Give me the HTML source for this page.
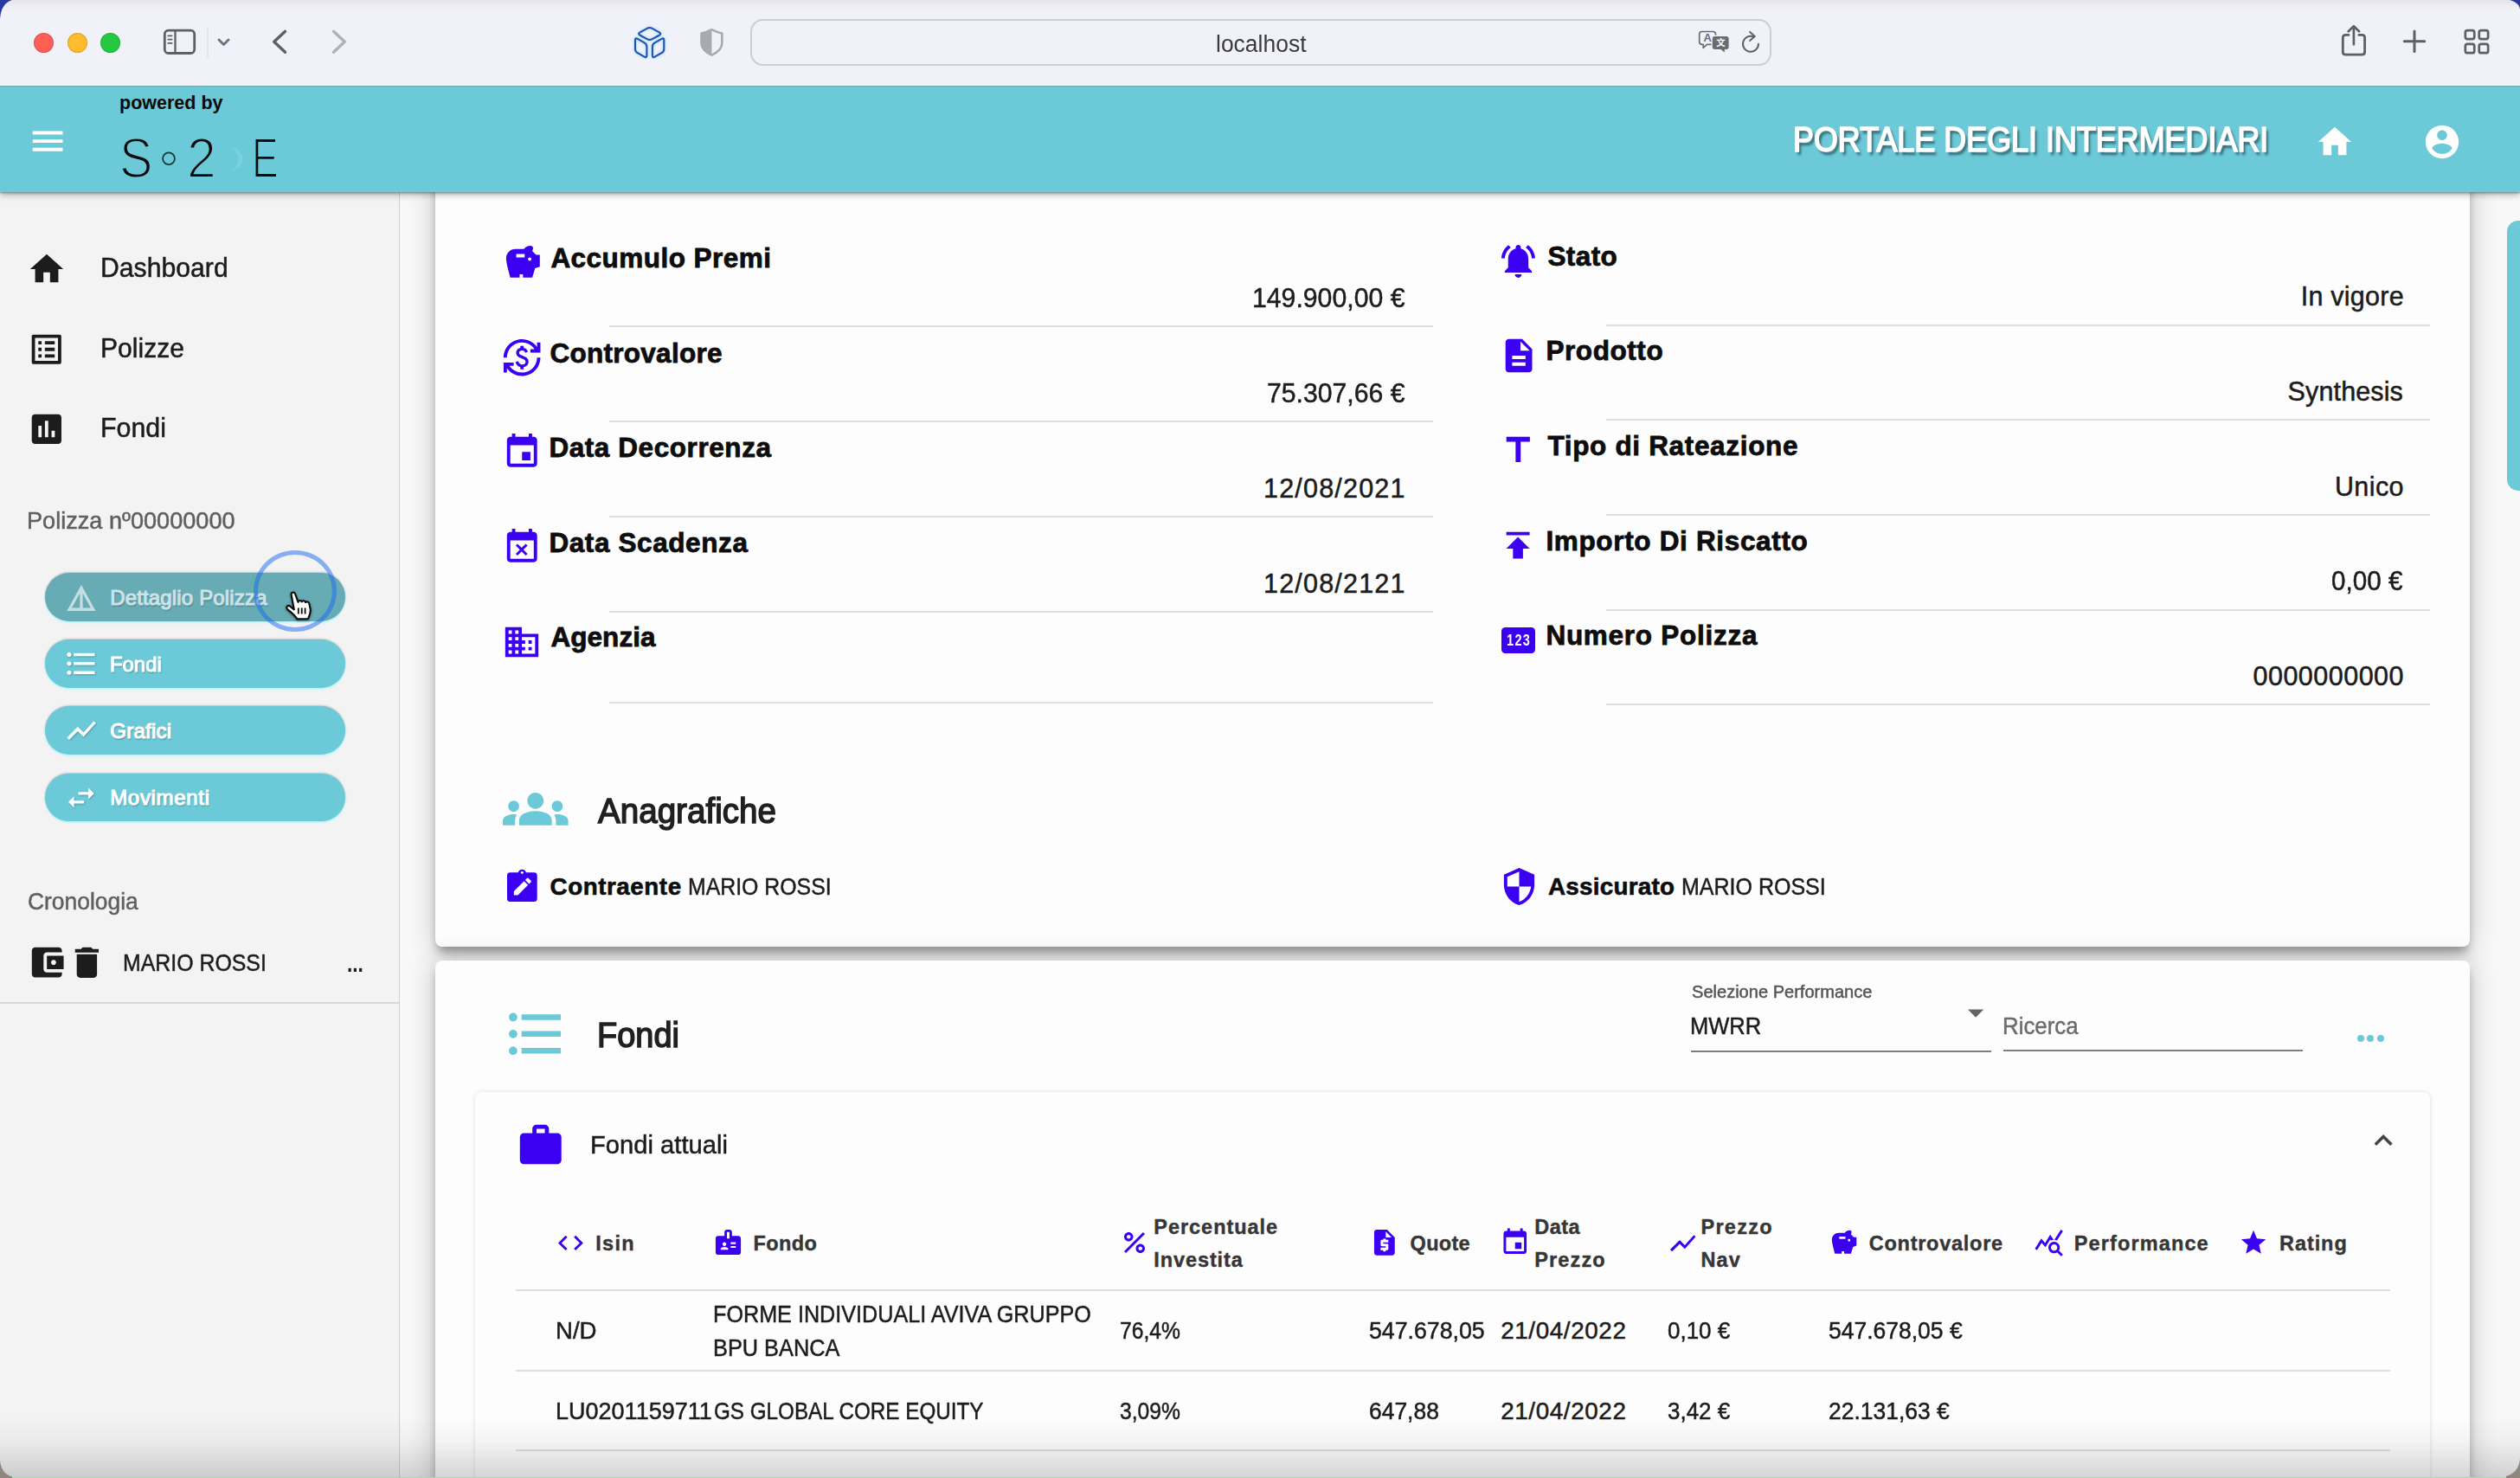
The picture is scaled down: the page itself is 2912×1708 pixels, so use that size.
<!DOCTYPE html>
<html lang="it"><head><meta charset="utf-8"><title>Portale degli Intermediari</title>
<style>
html,body{margin:0;padding:0}
body{width:2912px;height:1708px;position:relative;overflow:hidden;background:#f8f8f8;font-family:"Liberation Sans",sans-serif}
.t{position:absolute;white-space:nowrap;line-height:1}
.i{position:absolute;overflow:visible}
.a{position:absolute}
.ln{position:absolute;height:2px;background:#dfdfdf}
.card{position:absolute;background:#fdfdfd;box-shadow:0 9px 12px -3px rgba(0,0,0,.36),0 1px 30px 4px rgba(0,0,0,.16)}
.btn{position:absolute;left:52px;width:347px;height:55.4px;border-radius:28px;background:#6bc9d8;box-shadow:0 -1px 2px rgba(80,80,80,.3),0 1.5px 2px rgba(170,245,255,.95)}
</style></head><body>
<main>
<section class="card" style="left:502.7px;top:150px;width:2351.6px;height:943.6px;border-radius:0 0 8px 8px"></section>
<section class="card" style="left:502.7px;top:1110px;width:2351.6px;height:700px;border-radius:8px 8px 0 0"></section>
<div class="a" style="left:549px;top:1261.8px;width:2258.8px;height:600px;border-radius:8px;background:#fdfdfd;box-shadow:0 0 5px rgba(0,0,0,.13)"></div>
<div class="ln" style="left:703.7px;top:376.3px;width:952.1px;height:2px;background:#dfdfdf"></div>
<div class="ln" style="left:703.7px;top:486.2px;width:952.1px;height:2px;background:#dfdfdf"></div>
<div class="ln" style="left:703.7px;top:595.8px;width:952.1px;height:2px;background:#dfdfdf"></div>
<div class="ln" style="left:703.7px;top:705.5px;width:952.1px;height:2px;background:#dfdfdf"></div>
<div class="ln" style="left:703.7px;top:811.3px;width:952.1px;height:2px;background:#dfdfdf"></div>
<div class="ln" style="left:1855.6px;top:374.7px;width:952.4px;height:2px;background:#dfdfdf"></div>
<div class="ln" style="left:1855.6px;top:484.2px;width:952.4px;height:2px;background:#dfdfdf"></div>
<div class="ln" style="left:1855.6px;top:594.0px;width:952.4px;height:2px;background:#dfdfdf"></div>
<div class="ln" style="left:1855.6px;top:703.7px;width:952.4px;height:2px;background:#dfdfdf"></div>
<div class="ln" style="left:1855.6px;top:813.2px;width:952.4px;height:2px;background:#dfdfdf"></div>
<div class="ln" style="left:595.7px;top:1490.4px;width:2165.9px;height:2px;background:#dfdfdf"></div>
<div class="ln" style="left:595.7px;top:1583.3px;width:2165.9px;height:2px;background:#dfdfdf"></div>
<div class="ln" style="left:595.7px;top:1675.2px;width:2165.9px;height:2px;background:#dfdfdf"></div>
<div class="ln" style="left:1954.2px;top:1213.5px;width:346.6px;height:2px;background:#7d7d7d"></div>
<div class="ln" style="left:2314.9px;top:1212.7px;width:346.5px;height:2px;background:#7d7d7d"></div>
<svg class="i" style="left:580.5px;top:279.9px;width:46.7px;height:46.7px;" viewBox="0 0 24 24"><path fill="#3b00f2" d="M19.83 7.5l-2.27-2.27c.07-.42.18-.81.32-1.15.08-.18.12-.37.12-.58 0-.83-.67-1.5-1.5-1.5-1.64 0-3.09.79-4 2h-5C4.460 4 2 6.460 2 9.500S4.500 21 4.500 21H10v-2h2v2h5.500l1.680-5.590 2.820-.940V7.500h-2.170zM13 9H8V7h5v2zm3 2c-.55 0-1-.45-1-1s.45-1 1-1 1 .45 1 1-.45 1-1 1z"/></svg>
<svg class="i" style="left:579.9px;top:389.5px;width:46.4px;height:46.4px;" viewBox="0 0 24 24"><path fill="#3b00f2" d="M12.89 11.1c-1.78-.59-2.64-.96-2.64-1.9 0-1.02 1.11-1.39 1.81-1.39 1.31 0 1.79.99 1.9 1.34l1.58-.67c-.15-.45-.82-1.92-2.54-2.24V5h-2v1.260c-2.480.560-2.490 2.860-2.490 2.960 0 2.270 2.250 2.910 3.350 3.310 1.580.560 2.280 1.070 2.280 2.030 0 1.130-1.050 1.610-1.980 1.610-1.820 0-2.340-1.870-2.400-2.090l-1.660.670c.630 2.190 2.280 2.780 2.900 2.960V19h2v-1.240c.4-.09 2.900-.59 2.900-3.220 0-1.390-.61-2.610-3.010-3.440zM3 21H1v-6h6v2H4.520c1.610 2.410 4.360 4 7.480 4 4.970 0 9-4.030 9-9h2c0 6.080-4.920 11-11 11-3.720 0-7.010-1.850-9-4.670V21zm-2-9C1 5.920 5.920 1 12 1c3.720 0 7.010 1.850 9 4.670V3h2v6h-6V7h2.480C17.870 4.590 15.120 3 12 3c-4.970 0-9 4.030-9 9H1z"/></svg>
<svg class="i" style="left:580.0px;top:499.3px;width:46.5px;height:46.5px;" viewBox="0 0 24 24"><path fill="#3b00f2" d="M17 12h-5v5h5v-5zM16 1v2H8V1H6v2H5c-1.11 0-1.990.9-1.990 2L3 19c0 1.100.890 2 2 2h14c1.100 0 2-.9 2-2V5c0-1.100-.9-2-2-2h-1V1h-2zm3 18H5V8h14v11z"/></svg>
<svg class="i" style="left:580.0px;top:608.9px;width:46.5px;height:46.5px;" viewBox="0 0 24 24"><path fill="#3b00f2" d="M9.31 17l2.44-2.44L14.19 17l1.060-1.060-2.440-2.440 2.440-2.440L14.190 10l-2.440 2.440L9.310 10l-1.060 1.060 2.440 2.440-2.440 2.440L9.310 17zM19 3h-1V1h-2v2H8V1H6v2H5c-1.110 0-1.990.9-1.990 2L3 19c0 1.100.890 2 2 2h14c1.100 0 2-.9 2-2V5c0-1.100-.9-2-2-2zm0 16H5V8h14v11z"/></svg>
<svg class="i" style="left:580.2px;top:718.6px;width:46.0px;height:46.0px;" viewBox="0 0 24 24"><path fill="#3b00f2" d="M12 7V3H2v18h20V7H12zM6 19H4v-2h2v2zm0-4H4v-2h2v2zm0-4H4V9h2v2zm0-4H4V5h2v2zm4 12H8v-2h2v2zm0-4H8v-2h2v2zm0-4H8V9h2v2zm0-4H8V5h2v2zm10 12h-8v-2h2v-2h-2v-2h2v-2h-2V9h8v10zm-2-8h-2v2h2v-2zm0 4h-2v2h2v-2z"/></svg>
<svg class="i" style="left:1731.2px;top:277.9px;width:46.9px;height:46.9px;" viewBox="0 0 24 24"><path fill="#3b00f2" d="M7.58 4.08L6.15 2.65C3.75 4.48 2.17 7.3 2.03 10.5h2c.15-2.65 1.510-4.970 3.550-6.420zm12.390 6.420h2c-.15-3.200-1.730-6.020-4.120-7.850l-1.420 1.430c2.020 1.450 3.390 3.770 3.540 6.420zM18 11c0-3.070-1.640-5.640-4.500-6.320V4c0-.83-.67-1.500-1.500-1.500s-1.500.67-1.500 1.500v.680C7.630 5.360 6 7.920 6 11v5l-2 2v1h16v-1l-2-2v-5zm-6 11c.14 0 .27-.01.40-.04.65-.14 1.180-.58 1.440-1.180.1-.24.150-.5.150-.78h-4c.010 1.100.9 2 2.010 2z"/></svg>
<svg class="i" style="left:1731.6px;top:387.8px;width:46.2px;height:46.2px;" viewBox="0 0 24 24"><path fill="#3b00f2" d="M14 2H6c-1.100 0-1.990.9-1.990 2L4 20c0 1.100.890 2 1.990 2H18c1.100 0 2-.9 2-2V8l-6-6zm2 16H8v-2h8v2zm0-4H8v-2h8v2zm-3-5V3.500L18.500 9H13z"/></svg>
<svg class="i" style="left:1731.4px;top:497.3px;width:46.6px;height:46.6px;" viewBox="0 0 24 24"><path fill="#3b00f2" d="M5 4v3h5.500v12h3V7H19V4z"/></svg>
<svg class="i" style="left:1731.4px;top:607.4px;width:46.2px;height:46.2px;" viewBox="0 0 24 24"><path fill="#3b00f2" d="M5 4v2h14V4H5zm0 10h4v6h6v-6h4l-7-7-7 7z"/></svg>
<svg class="i" style="left:581.1px;top:896.8px;width:75.6px;height:75.6px;" viewBox="0 0 24 24"><path fill="#6bc9d8" d="M12 12.750c1.630 0 3.070.39 4.240.9 1.080.48 1.760 1.560 1.760 2.730V18H6v-1.610c0-1.180.680-2.260 1.760-2.730 1.170-.520 2.610-.910 4.240-.910zM4 13c1.100 0 2-.9 2-2s-.9-2-2-2-2 .9-2 2 .9 2 2 2zm1.130 1.100c-.370-.06-.740-.1-1.130-.1-.990 0-1.930.21-2.780.58C.480 14.900 0 15.620 0 16.430V18h4.500v-1.610c0-.830.230-1.610.630-2.290zM20 13c1.100 0 2-.9 2-2s-.9-2-2-2-2 .9-2 2 .9 2 2 2zm4 3.430c0-.81-.48-1.530-1.220-1.850-.85-.37-1.790-.58-2.780-.58-.39 0-.76.04-1.130.1.4.68.630 1.460.630 2.290V18H24v-1.570zM12 6c1.660 0 3 1.340 3 3s-1.340 3-3 3-3-1.340-3-3 1.340-3 3-3z"/></svg>
<svg class="i" style="left:1731.6px;top:1001.2px;width:47.0px;height:47.0px;" viewBox="0 0 24 24"><path fill="#3b00f2" d="M12 1L3 5v6c0 5.550 3.840 10.740 9 12 5.160-1.260 9-6.450 9-12V5l-9-4zm0 10.990h7c-.53 4.120-3.280 7.790-7 8.940V12H5V6.300l7-3.110v8.800z"/></svg>
<svg class="i" style="left:580.1px;top:1155.6px;width:77.7px;height:77.7px;" viewBox="0 0 24 24"><path fill="#6bc9d8" d="M4 10.5c-.83 0-1.5.67-1.5 1.5s.67 1.5 1.5 1.5 1.5-.67 1.5-1.5-.67-1.5-1.5-1.5zm0-6c-.83 0-1.5.67-1.5 1.5S3.17 7.5 4 7.5 5.5 6.83 5.5 6 4.83 4.500 4 4.500zm0 12c-.83 0-1.5.68-1.5 1.5s.68 1.5 1.5 1.5 1.5-.68 1.5-1.5-.67-1.5-1.5-1.5zM7 19h14v-2H7v2zm0-6h14v-2H7v2zm0-8v2h14V5H7z"/></svg>
<svg class="i" style="left:2261.4px;top:1147.8px;width:44.3px;height:44.3px;" viewBox="0 0 24 24"><path fill="#666" d="M7 10l5 5 5-5z"/></svg>
<svg class="i" style="left:595.7px;top:1294.9px;width:57.5px;height:57.5px;" viewBox="0 0 24 24"><path fill="#3b00f2" d="M20 6h-4V4c0-1.110-.89-2-2-2h-4c-1.110 0-2 .89-2 2v2H4c-1.110 0-1.990.89-1.990 2L2 19c0 1.110.890 2 2 2h16c1.110 0 2-.89 2-2V8c0-1.110-.89-2-2-2zm-6 0h-4V4h4v2z"/></svg>
<svg class="i" style="left:2733.0px;top:1296.7px;width:42.2px;height:42.2px;" viewBox="0 0 24 24"><path fill="#444" d="M12 8l-6 6 1.410 1.410L12 10.830l4.590 4.580L18 14z"/></svg>
<svg class="i" style="left:641.6px;top:1418.9px;width:34.8px;height:34.8px;" viewBox="0 0 24 24"><path fill="#3b00f2" d="M9.400 16.600L4.800 12l4.600-4.600L8 6l-6 6 6 6 1.400-1.400zm5.200 0l4.600-4.600-4.600-4.600L16 6l6 6-6 6-1.400-1.400z"/></svg>
<svg class="i" style="left:824.0px;top:1418.2px;width:35.0px;height:35.0px;" viewBox="0 0 24 24"><path fill="#3b00f2" d="M20 7h-5V4c0-1.100-.9-2-2-2h-2c-1.100 0-2 .9-2 2v3H4c-1.100 0-2 .9-2 2v11c0 1.100.9 2 2 2h16c1.100 0 2-.9 2-2V9c0-1.100-.9-2-2-2zM9 12c.83 0 1.500.67 1.500 1.500S9.830 15 9 15s-1.500-.67-1.500-1.500S8.170 12 9 12zm3 6H6v-.75c0-1 2-1.500 3-1.500s3 .5 3 1.500V18zm1-9h-2V4h2v5zm5 7.500h-4V15h4v1.500zm0-3h-4V12h4v1.500z"/></svg>
<svg class="i" style="left:1293.0px;top:1418.0px;width:36.0px;height:36.0px;" viewBox="0 0 24 24"><path fill="#3b00f2" d="M7.500 4C5.570 4 4 5.570 4 7.500S5.570 11 7.500 11 11 9.430 11 7.500 9.430 4 7.500 4zm0 5C6.670 9 6 8.330 6 7.500S6.670 6 7.500 6 9 6.670 9 7.500 8.330 9 7.500 9zM16.500 13c-1.930 0-3.500 1.570-3.500 3.500s1.570 3.500 3.500 3.500 3.500-1.570 3.500-3.500-1.570-3.500-3.500-3.500zm0 5c-.83 0-1.500-.67-1.500-1.500s.67-1.500 1.500-1.500 1.500.67 1.500 1.500-.67 1.500-1.500 1.500zM5.410 20L4 18.590 18.590 4 20 5.410z"/></svg>
<svg class="i" style="left:1581.8px;top:1417.6px;width:35.7px;height:35.7px;" viewBox="0 0 24 24"><path fill="#3b00f2" d="M14 2H6c-1.100 0-2 .9-2 2v16c0 1.100.9 2 2 2h12c1.100 0 2-.9 2-2V8l-6-6zm1 10h-4v1h3c.55 0 1 .45 1 1v3c0 .55-.45 1-1 1h-1v1h-2v-1H9v-2h4v-1h-3c-.55 0-1-.45-1-1v-3c0-.55.45-1 1-1h1V9h2v1h2v2zm-2-4V3.500L17.500 8H13z"/></svg>
<svg class="i" style="left:1733.2px;top:1417.8px;width:35.5px;height:35.5px;" viewBox="0 0 24 24"><path fill="#3b00f2" d="M17 12h-5v5h5v-5zM16 1v2H8V1H6v2H5c-1.11 0-1.990.9-1.990 2L3 19c0 1.100.890 2 2 2h14c1.100 0 2-.9 2-2V5c0-1.100-.9-2-2-2h-1V1h-2zm3 18H5V8h14v11z"/></svg>
<svg class="i" style="left:1927.1px;top:1418.5px;width:35.4px;height:35.4px;" viewBox="0 0 24 24"><path fill="#3b00f2" d="M3.5 18.49l6-6.01 4 4L22 6.92l-1.41-1.41-7.09 7.97-4-4L2 16.990z"/></svg>
<svg class="i" style="left:2113.6px;top:1419.3px;width:34.1px;height:34.1px;" viewBox="0 0 24 24"><path fill="#3b00f2" d="M19.83 7.5l-2.27-2.27c.07-.42.18-.81.32-1.15.08-.18.12-.37.12-.58 0-.83-.67-1.5-1.5-1.5-1.64 0-3.09.79-4 2h-5C4.460 4 2 6.460 2 9.500S4.500 21 4.500 21H10v-2h2v2h5.500l1.680-5.590 2.820-.940V7.500h-2.170zM13 9H8V7h5v2zm3 2c-.55 0-1-.45-1-1s.45-1 1-1 1 .45 1 1-.45 1-1 1z"/></svg>
<svg class="i" style="left:2349.9px;top:1417.9px;width:35.3px;height:35.3px;" viewBox="0 0 24 24"><path fill="#3b00f2" d="M19.880 18.470c.440-.7.700-1.510.700-2.390 0-2.490-2.010-4.500-4.500-4.500s-4.500 2.010-4.500 4.500 2.010 4.500 4.490 4.500c.880 0 1.700-.260 2.390-.7L21.580 23 23 21.580l-3.120-3.110zm-3.800.11c-1.380 0-2.500-1.120-2.500-2.500s1.120-2.500 2.500-2.500 2.500 1.120 2.500 2.500-1.120 2.500-2.500 2.500zm-.360-8.500c-.740.020-1.450.180-2.100.450l-.550-.830-3.800 6.180-3.010-3.520-3.630 5.810L1 17l5-8 3 3.500L13 6l2.720 4.080zm2.590.5c-.640-.280-1.330-.450-2.050-.490L21.380 2 23 3.180l-4.690 7.400z"/></svg>
<svg class="i" style="left:2587.3px;top:1419.3px;width:34.1px;height:34.1px;" viewBox="0 0 24 24"><path fill="#3b00f2" d="M12 17.270L18.180 21l-1.640-7.030L22 9.240l-7.190-.610L12 2 9.190 8.630 2 9.240l5.460 4.730L5.820 21z"/></svg>
<span class="t" style="left:636.4px;top:282.7px;font-size:31.5px;color:#0d0d0d;font-weight:700;letter-spacing:0.46px;-webkit-text-stroke:0.8px currentColor;">Accumulo Premi</span>
<span class="t" style="left:635.4px;top:392.7px;font-size:31.5px;color:#0d0d0d;font-weight:700;letter-spacing:0.28px;-webkit-text-stroke:0.8px currentColor;">Controvalore</span>
<span class="t" style="left:634.4px;top:502.1px;font-size:31.5px;color:#0d0d0d;font-weight:700;letter-spacing:0.57px;-webkit-text-stroke:0.8px currentColor;">Data Decorrenza</span>
<span class="t" style="left:634.4px;top:611.7px;font-size:31.5px;color:#0d0d0d;font-weight:700;letter-spacing:0.60px;-webkit-text-stroke:0.8px currentColor;">Data Scadenza</span>
<span class="t" style="left:636.4px;top:721.3px;font-size:31.5px;color:#0d0d0d;font-weight:700;letter-spacing:0.07px;-webkit-text-stroke:0.8px currentColor;">Agenzia</span>
<span class="t" style="left:1788.4px;top:280.7px;font-size:31.5px;color:#0d0d0d;font-weight:700;letter-spacing:0.42px;-webkit-text-stroke:0.8px currentColor;">Stato</span>
<span class="t" style="left:1786.4px;top:390.1px;font-size:31.5px;color:#0d0d0d;font-weight:700;letter-spacing:0.58px;-webkit-text-stroke:0.8px currentColor;">Prodotto</span>
<span class="t" style="left:1788.4px;top:500.1px;font-size:31.5px;color:#0d0d0d;font-weight:700;letter-spacing:0.67px;-webkit-text-stroke:0.8px currentColor;">Tipo di Rateazione</span>
<span class="t" style="left:1786.4px;top:609.8px;font-size:31.5px;color:#0d0d0d;font-weight:700;letter-spacing:0.66px;-webkit-text-stroke:0.8px currentColor;">Importo Di Riscatto</span>
<span class="t" style="left:1786.4px;top:719.4px;font-size:31.5px;color:#0d0d0d;font-weight:700;letter-spacing:0.74px;-webkit-text-stroke:0.8px currentColor;">Numero Polizza</span>
<span class="t" style="left:1447.3px;top:328.7px;font-size:30.5px;color:#1c1c1c;-webkit-text-stroke:0.5px currentColor;transform-origin:0 0;transform:scaleX(0.9908);">149.900,00 €</span>
<span class="t" style="left:1464.3px;top:438.6px;font-size:30.5px;color:#1c1c1c;-webkit-text-stroke:0.5px currentColor;transform-origin:0 0;transform:scaleX(0.9896);">75.307,66 €</span>
<span class="t" style="left:1460.0px;top:548.6px;font-size:30.5px;color:#1c1c1c;letter-spacing:1.20px;-webkit-text-stroke:0.5px currentColor;">12/08/2021</span>
<span class="t" style="left:1460.0px;top:658.5px;font-size:30.5px;color:#1c1c1c;letter-spacing:1.20px;-webkit-text-stroke:0.5px currentColor;">12/08/2121</span>
<span class="t" style="left:2658.7px;top:326.8px;font-size:30.5px;color:#1c1c1c;letter-spacing:0.24px;-webkit-text-stroke:0.5px currentColor;">In vigore</span>
<span class="t" style="left:2643.6px;top:436.8px;font-size:30.5px;color:#1c1c1c;letter-spacing:0.13px;-webkit-text-stroke:0.5px currentColor;">Synthesis</span>
<span class="t" style="left:2697.9px;top:546.6px;font-size:30.5px;color:#1c1c1c;letter-spacing:0.42px;-webkit-text-stroke:0.5px currentColor;">Unico</span>
<span class="t" style="left:2694.1px;top:656.3px;font-size:30.5px;color:#1c1c1c;-webkit-text-stroke:0.5px currentColor;transform-origin:0 0;transform:scaleX(0.9721);">0,00 €</span>
<span class="t" style="left:2603.5px;top:765.8px;font-size:30.5px;color:#1c1c1c;letter-spacing:0.49px;-webkit-text-stroke:0.5px currentColor;">0000000000</span>
<span class="t" style="left:691.0px;top:916.6px;font-size:40.5px;color:#202020;-webkit-text-stroke:1.5px currentColor;transform-origin:0 0;transform:scaleX(0.9528);">Anagrafiche</span>
<span class="t" style="left:635.6px;top:1011.0px;font-size:27.8px;color:#0d0d0d;font-weight:700;letter-spacing:0.53px;-webkit-text-stroke:0.6px currentColor;">Contraente</span>
<span class="t" style="left:794.5px;top:1011.0px;font-size:27.8px;color:#1c1c1c;-webkit-text-stroke:0.5px currentColor;transform-origin:0 0;transform:scaleX(0.8937);">MARIO ROSSI</span>
<span class="t" style="left:1788.9px;top:1010.8px;font-size:27.8px;color:#0d0d0d;font-weight:700;letter-spacing:0.27px;-webkit-text-stroke:0.6px currentColor;">Assicurato</span>
<span class="t" style="left:1942.5px;top:1010.8px;font-size:27.8px;color:#1c1c1c;-webkit-text-stroke:0.5px currentColor;transform-origin:0 0;transform:scaleX(0.8997);">MARIO ROSSI</span>
<span class="t" style="left:690.0px;top:1175.7px;font-size:40.5px;color:#202020;-webkit-text-stroke:1.5px currentColor;transform-origin:0 0;transform:scaleX(0.9376);">Fondi</span>
<span class="t" style="left:1955.2px;top:1134.5px;font-size:21px;color:#555;-webkit-text-stroke:0.5px currentColor;transform-origin:0 0;transform:scaleX(0.9549);">Selezione Performance</span>
<span class="t" style="left:1953.3px;top:1172.0px;font-size:27.8px;color:#1c1c1c;-webkit-text-stroke:0.5px currentColor;transform-origin:0 0;transform:scaleX(0.9183);">MWRR</span>
<span class="t" style="left:2314.0px;top:1172.0px;font-size:27.8px;color:#6c6c6c;-webkit-text-stroke:0.5px currentColor;transform-origin:0 0;transform:scaleX(0.9293);">Ricerca</span>
<span class="t" style="left:682.0px;top:1308.0px;font-size:29.5px;color:#1c1c1c;-webkit-text-stroke:0.5px currentColor;transform-origin:0 0;transform:scaleX(0.9888);">Fondi attuali</span>
<span class="t" style="left:688.3px;top:1426.0px;font-size:23.5px;color:#363636;font-weight:700;letter-spacing:1.26px;-webkit-text-stroke:0.4px currentColor;">Isin</span>
<span class="t" style="left:870.6px;top:1426.0px;font-size:23.5px;color:#363636;font-weight:700;letter-spacing:0.37px;-webkit-text-stroke:0.4px currentColor;">Fondo</span>
<span class="t" style="left:1333.3px;top:1406.5px;font-size:23.5px;color:#363636;font-weight:700;letter-spacing:0.96px;-webkit-text-stroke:0.4px currentColor;">Percentuale</span>
<span class="t" style="left:1333.3px;top:1445.2px;font-size:23.5px;color:#363636;font-weight:700;letter-spacing:0.90px;-webkit-text-stroke:0.4px currentColor;">Investita</span>
<span class="t" style="left:1629.6px;top:1426.2px;font-size:23.5px;color:#363636;font-weight:700;letter-spacing:0.27px;-webkit-text-stroke:0.4px currentColor;">Quote</span>
<span class="t" style="left:1773.2px;top:1406.5px;font-size:23.5px;color:#363636;font-weight:700;letter-spacing:0.48px;-webkit-text-stroke:0.4px currentColor;">Data</span>
<span class="t" style="left:1773.2px;top:1445.2px;font-size:23.5px;color:#363636;font-weight:700;letter-spacing:1.14px;-webkit-text-stroke:0.4px currentColor;">Prezzo</span>
<span class="t" style="left:1965.5px;top:1406.5px;font-size:23.5px;color:#363636;font-weight:700;letter-spacing:1.26px;-webkit-text-stroke:0.4px currentColor;">Prezzo</span>
<span class="t" style="left:1965.5px;top:1445.2px;font-size:23.5px;color:#363636;font-weight:700;letter-spacing:1.13px;-webkit-text-stroke:0.4px currentColor;">Nav</span>
<span class="t" style="left:2159.8px;top:1426.2px;font-size:23.5px;color:#363636;font-weight:700;letter-spacing:0.73px;-webkit-text-stroke:0.4px currentColor;">Controvalore</span>
<span class="t" style="left:2396.7px;top:1426.2px;font-size:23.5px;color:#363636;font-weight:700;letter-spacing:1.13px;-webkit-text-stroke:0.4px currentColor;">Performance</span>
<span class="t" style="left:2634.0px;top:1426.2px;font-size:23.5px;color:#363636;font-weight:700;letter-spacing:0.93px;-webkit-text-stroke:0.4px currentColor;">Rating</span>
<span class="t" style="left:641.9px;top:1524.2px;font-size:27.8px;color:#1c1c1c;-webkit-text-stroke:0.5px currentColor;transform-origin:0 0;transform:scaleX(0.9934);">N/D</span>
<span class="t" style="left:823.5px;top:1505.1px;font-size:27.8px;color:#1c1c1c;-webkit-text-stroke:0.5px currentColor;transform-origin:0 0;transform:scaleX(0.9056);">FORME INDIVIDUALI AVIVA GRUPPO</span>
<span class="t" style="left:823.5px;top:1543.7px;font-size:27.8px;color:#1c1c1c;-webkit-text-stroke:0.5px currentColor;transform-origin:0 0;transform:scaleX(0.9113);">BPU BANCA</span>
<span class="t" style="left:1294.4px;top:1524.4px;font-size:27.8px;color:#1c1c1c;-webkit-text-stroke:0.5px currentColor;transform-origin:0 0;transform:scaleX(0.8884);">76,4%</span>
<span class="t" style="left:1581.8px;top:1524.4px;font-size:27.8px;color:#1c1c1c;-webkit-text-stroke:0.5px currentColor;transform-origin:0 0;transform:scaleX(0.9611);">547.678,05</span>
<span class="t" style="left:1734.2px;top:1524.4px;font-size:27.8px;color:#1c1c1c;letter-spacing:0.62px;-webkit-text-stroke:0.5px currentColor;">21/04/2022</span>
<span class="t" style="left:1927.0px;top:1524.4px;font-size:27.8px;color:#1c1c1c;-webkit-text-stroke:0.5px currentColor;transform-origin:0 0;transform:scaleX(0.9346);">0,10 €</span>
<span class="t" style="left:2112.6px;top:1524.4px;font-size:27.8px;color:#1c1c1c;-webkit-text-stroke:0.5px currentColor;transform-origin:0 0;transform:scaleX(0.9528);">547.678,05 €</span>
<span class="t" style="left:641.7px;top:1616.7px;font-size:27.8px;color:#1c1c1c;-webkit-text-stroke:0.5px currentColor;transform-origin:0 0;transform:scaleX(0.9720);">LU0201159711</span>
<span class="t" style="left:824.5px;top:1617.1px;font-size:27.8px;color:#1c1c1c;-webkit-text-stroke:0.5px currentColor;transform-origin:0 0;transform:scaleX(0.8716);">GS GLOBAL CORE EQUITY</span>
<span class="t" style="left:1294.4px;top:1617.1px;font-size:27.8px;color:#1c1c1c;-webkit-text-stroke:0.5px currentColor;transform-origin:0 0;transform:scaleX(0.8884);">3,09%</span>
<span class="t" style="left:1581.8px;top:1617.1px;font-size:27.8px;color:#1c1c1c;-webkit-text-stroke:0.5px currentColor;transform-origin:0 0;transform:scaleX(0.9514);">647,88</span>
<span class="t" style="left:1734.2px;top:1617.1px;font-size:27.8px;color:#1c1c1c;letter-spacing:0.62px;-webkit-text-stroke:0.5px currentColor;">21/04/2022</span>
<span class="t" style="left:1927.0px;top:1617.1px;font-size:27.8px;color:#1c1c1c;-webkit-text-stroke:0.5px currentColor;transform-origin:0 0;transform:scaleX(0.9346);">3,42 €</span>
<span class="t" style="left:2112.6px;top:1617.1px;font-size:27.8px;color:#1c1c1c;-webkit-text-stroke:0.5px currentColor;transform-origin:0 0;transform:scaleX(0.9523);">22.131,63 €</span>
<div class="a" style="left:2723.500px;top:1195.600px;width:8px;height:8px;border-radius:50%;background:#6bc9d8"></div>
<div class="a" style="left:2735px;top:1195.600px;width:8px;height:8px;border-radius:50%;background:#6bc9d8"></div>
<div class="a" style="left:2746.500px;top:1195.600px;width:8px;height:8px;border-radius:50%;background:#6bc9d8"></div>
<div class="a" style="left:1735.300px;top:725.100px;width:38.600px;height:30.400px;border-radius:4.500px;background:#3b00f2"></div>
<span class="t" style="left:1741.200px;top:731.700px;font-size:17.500px;font-weight:700;color:#fff;letter-spacing:1.600px;transform-origin:0 0;transform:scaleX(.83)">123</span>
<svg class="i" style="left:586px;top:1004px;width:34.700px;height:38px" viewBox="0 0 34.700 38">
<path d="M3.500 4.300h9.300a4.700 4.700 0 0 1 9.100 0h9.300q3.500 0 3.500 3.500v26.700q0 3.500-3.500 3.500h-27.700q-3.500 0-3.500-3.500v-26.700q0-3.500 3.500-3.500z" fill="#3b00f2"/>
<circle cx="17.350" cy="4.300" r="1.500" fill="#fdfdfd"/>
<path transform="translate(-.5 1.700)" d="M8.300 28.900v-4.600l11.800-11.800 4.600 4.600-11.800 11.800zM21.400 11.200l1.900-1.900q1-1 2 0l2.600 2.600q1 1 0 2l-1.900 1.900z" fill="#fdfdfd"/>
</svg>
</main>
<aside>
<div class="a" style="left:0;top:200px;width:460.6px;height:1520px;background:#f3f3f3;border-right:1.6px solid #d0d0d0"></div>
<div class="a" style="left:0;top:1158px;width:461px;height:2px;background:#d6d6d6"></div>
<nav>
<div class="btn" style="top:662.2px;background:#67abb5"></div>
<div class="btn" style="top:739.3px"></div>
<div class="btn" style="top:816.4px"></div>
<div class="btn" style="top:893.6px"></div>
<svg class="i" style="left:31.0px;top:288.0px;width:46.0px;height:46.0px;" viewBox="0 0 24 24"><path fill="#1c1c1c" d="M10 20v-6h4v6h5v-8h3L12 3 2 12h3v8z"/></svg>
<svg class="i" style="left:31.2px;top:380.6px;width:45.5px;height:45.5px;" viewBox="0 0 24 24"><path fill="#1c1c1c" d="M19 5v14H5V5h14m1.1-2H3.9c-.5 0-.9.4-.9.9v16.2c0 .4.4.9.9.9h16.2c.4 0 .9-.5.9-.9V3.9c0-.5-.5-.9-.9-.9zM11 7h6v2h-6V7zm0 4h6v2h-6v-2zm0 4h6v2h-6zM7 7h2v2H7zm0 4h2v2H7zm0 4h2v2H7z"/></svg>
<svg class="i" style="left:31.0px;top:472.6px;width:45.7px;height:45.7px;" viewBox="0 0 24 24"><path fill="#1c1c1c" d="M19 3H5c-1.1 0-2 .9-2 2v14c0 1.1.9 2 2 2h14c1.1 0 2-.9 2-2V5c0-1.1-.9-2-2-2zM9 17H7v-7h2v7zm4 0h-2V7h2v10zm4 0h-2v-4h2v4z"/></svg>
<svg class="i" style="left:74.1px;top:670.7px;width:39.9px;height:39.9px;" viewBox="0 0 24 24"><path fill="#c4dde2" d="M12 3L2 21h20L12 3zm1 5.92L18.600 19H13V8.920zm-2 0V19H5.400L11 8.920z"/></svg>
<svg class="i" style="left:73.4px;top:746.2px;width:41.7px;height:41.7px;filter:drop-shadow(1px 1.5px 1px rgba(0,0,0,.22));" viewBox="0 0 24 24"><path fill="#fff" d="M4 10.5c-.83 0-1.5.67-1.5 1.5s.67 1.5 1.5 1.5 1.5-.67 1.5-1.5-.67-1.5-1.5-1.5zm0-6c-.83 0-1.5.67-1.5 1.5S3.17 7.5 4 7.5 5.5 6.83 5.5 6 4.83 4.500 4 4.500zm0 12c-.83 0-1.5.68-1.5 1.5s.68 1.5 1.5 1.5 1.5-.68 1.5-1.5-.67-1.5-1.5-1.5zM7 19h14v-2H7v2zm0-6h14v-2H7v2zm0-8v2h14V5H7z"/></svg>
<svg class="i" style="left:74.0px;top:824.0px;width:40.2px;height:40.2px;filter:drop-shadow(1px 1.5px 1px rgba(0,0,0,.22));" viewBox="0 0 24 24"><path fill="#fff" d="M3.5 18.49l6-6.01 4 4L22 6.92l-1.41-1.41-7.09 7.97-4-4L2 16.990z"/></svg>
<svg class="i" style="left:74.0px;top:901.5px;width:39.7px;height:39.7px;filter:drop-shadow(1px 1.5px 1px rgba(0,0,0,.22));" viewBox="0 0 24 24"><path fill="#fff" d="M6.99 11L3 15l3.99 4v-3H14v-2H6.99v-3zM21 9l-3.99-4v3H10v2h7.01v3L21 9z"/></svg>
<svg class="i" style="left:30.8px;top:1089.3px;width:46.4px;height:46.4px;" viewBox="0 0 24 24"><path fill="#1c1c1c" d="M21 18v1c0 1.1-.9 2-2 2H5c-1.11 0-2-.9-2-2V5c0-1.1.89-2 2-2h14c1.1 0 2 .9 2 2v1h-9c-1.11 0-2 .9-2 2v8c0 1.1.89 2 2 2h9zm-9-2h10V8H12v8zm4-2.5c-.83 0-1.5-.67-1.5-1.5s.67-1.5 1.5-1.5 1.5.67 1.5 1.5-.67 1.5-1.5 1.5z"/></svg>
<svg class="i" style="left:76.9px;top:1089.1px;width:46.8px;height:46.8px;" viewBox="0 0 24 24"><path fill="#1c1c1c" d="M6 19c0 1.1.9 2 2 2h8c1.1 0 2-.9 2-2V7H6v12zM19 4h-3.5l-1-1h-5l-1 1H5v2h14V4z"/></svg>
<span class="t" style="left:116.2px;top:294.4px;font-size:31.5px;color:#1c1c1c;-webkit-text-stroke:0.5px currentColor;transform-origin:0 0;transform:scaleX(0.9583);">Dashboard</span>
<span class="t" style="left:116.2px;top:386.5px;font-size:31.5px;color:#1c1c1c;-webkit-text-stroke:0.5px currentColor;transform-origin:0 0;transform:scaleX(0.9543);">Polizze</span>
<span class="t" style="left:116.2px;top:478.5px;font-size:31.5px;color:#1c1c1c;-webkit-text-stroke:0.5px currentColor;transform-origin:0 0;transform:scaleX(0.9639);">Fondi</span>
<span class="t" style="left:30.7px;top:588.0px;font-size:27.8px;color:#5f5f5f;-webkit-text-stroke:0.5px currentColor;transform-origin:0 0;transform:scaleX(0.9756);">Polizza nº00000000</span>
<span class="t" style="left:127.2px;top:678.5px;font-size:24px;color:#cde2e7;letter-spacing:0.16px;-webkit-text-stroke:1.1px currentColor;text-shadow:1px 1.5px 1.5px rgba(0,0,0,.22);">Dettaglio Polizza</span>
<span class="t" style="left:127.3px;top:755.5px;font-size:24px;color:#fff;-webkit-text-stroke:1.1px currentColor;transform-origin:0 0;transform:scaleX(0.9947);text-shadow:1px 1.5px 1.5px rgba(0,0,0,.22);">Fondi</span>
<span class="t" style="left:127.2px;top:832.6px;font-size:24px;color:#fff;letter-spacing:0.27px;-webkit-text-stroke:1.1px currentColor;text-shadow:1px 1.5px 1.5px rgba(0,0,0,.22);">Grafici</span>
<span class="t" style="left:127.2px;top:909.6px;font-size:24px;color:#fff;letter-spacing:0.68px;-webkit-text-stroke:1.1px currentColor;text-shadow:1px 1.5px 1.5px rgba(0,0,0,.22);">Movimenti</span>
<span class="t" style="left:31.7px;top:1027.6px;font-size:27.8px;color:#5f5f5f;-webkit-text-stroke:0.5px currentColor;transform-origin:0 0;transform:scaleX(0.9502);">Cronologia</span>
<span class="t" style="left:141.8px;top:1099.1px;font-size:27.8px;color:#1c1c1c;-webkit-text-stroke:0.5px currentColor;transform-origin:0 0;transform:scaleX(0.8948);">MARIO ROSSI</span>
<span class="t" style="left:400.8px;top:1100.1px;font-size:27.8px;color:#1c1c1c;font-weight:700;transform-origin:0 0;transform:scaleX(0.8168);">...</span>
</nav>
<div class="a" style="left:293px;top:636.200px;width:85.600px;height:84.200px;border-radius:50%;border:5.600px solid rgba(25,105,237,.5)"></div>
<svg class="i" style="left:330px;top:684px;width:32px;height:34px;filter:drop-shadow(0 1px 1.500px rgba(0,0,0,.45))" viewBox="0 0 32 34">
<path d="M6.600 3.200C6 .8 9.800-.6 10.900 1.900L14.600 11.800C14.900 9.600 18 9.300 18.700 11.400C19.400 9.700 22.500 9.800 23 12C24 10.800 26.900 11.300 27.300 13.600L28.700 20C29.300 24 27.800 27 26 31.200L13.300 31.400C11.500 27.500 6.500 23.500 2.400 20.300C.2 18.400 1.800 14.800 4.800 16.400L9.800 20.300Z" fill="#fff" stroke="#0b0b0b" stroke-width="2.100" stroke-linejoin="round"/>
<path d="M14.800 18.500v7M18.700 18.500v7M22.600 18.500v7" stroke="#0b0b0b" stroke-width="1.800" fill="none"/>
</svg>
</aside>
<div class="a" style="left:2896.6px;top:255.4px;width:34px;height:311.2px;border-radius:13px;background:#6bc9d8"></div>
<header>
<div class="a" style="left:0;top:99px;width:2912px;height:123.3px;background:#6bc9d8;box-shadow:0 1px 2.5px rgba(40,90,100,.6),0 3px 8px rgba(0,0,0,.28)"></div>
<span class="t" style="left:137.5px;top:150.6px;font-size:64px;color:#0c0c0c;-webkit-text-stroke:2.1px #6bc9d8;transform-origin:0 0;transform:scaleX(.9)">S</span>
<span class="t" style="left:215.5px;top:150.6px;font-size:64px;color:#0c0c0c;-webkit-text-stroke:2.1px #6bc9d8;transform-origin:0 0;transform:scaleX(.95)">2</span>
<span class="t" style="left:291px;top:150.6px;font-size:64px;color:#0c0c0c;-webkit-text-stroke:2.1px #6bc9d8;transform-origin:0 0;transform:scaleX(.72)">E</span>
<svg class="i" style="left:180px;top:160px;width:110px;height:50px" viewBox="180 160 110 50">
<circle cx="195" cy="183.3" r="6.9" fill="none" stroke="#16363c" stroke-width="1.8"/>
<path d="M265 168.5 C276 172 280.500 178 280.500 184 C280.500 190 275 196 264.500 199 C272 195 275.500 190 275.500 184 C275.500 178 272 173 265 168.500Z" fill="#82dbe8" opacity=".55"/>
</svg>
<svg class="i" style="left:32.3px;top:140.3px;width:46.3px;height:46.3px;" viewBox="0 0 24 24"><path fill="#ffffff" d="M3 18h18v-2H3v2zm0-5h18v-2H3v2zm0-7v2h18V6H3z"/></svg>
<svg class="i" style="left:2675.0px;top:141.0px;width:46.0px;height:46.0px;" viewBox="0 0 24 24"><path fill="#ffffff" d="M10 20v-6h4v6h5v-8h3L12 3 2 12h3v8z"/></svg>
<svg class="i" style="left:2798.7px;top:140.6px;width:46.0px;height:46.0px;" viewBox="0 0 24 24"><path fill="#ffffff" d="M12 2C6.48 2 2 6.48 2 12s4.48 10 10 10 10-4.48 10-10S17.52 2 12 2zm0 3c1.66 0 3 1.34 3 3s-1.34 3-3 3-3-1.34-3-3 1.34-3 3-3zm0 14.2c-2.5 0-4.71-1.28-6-3.22.03-1.99 4-3.08 6-3.08 1.99 0 5.97 1.09 6 3.08-1.29 1.94-3.5 3.22-6 3.22z"/></svg>
<span class="t" style="left:138.0px;top:109.0px;font-size:21.5px;color:#0a0a0a;font-weight:700;">powered by</span>
<span class="t" style="left:2071.7px;top:141.4px;font-size:40px;color:#ffffff;-webkit-text-stroke:1.7px currentColor;transform-origin:0 0;transform:scaleX(0.8976);text-shadow:3px 3.5px 3px rgba(0,0,0,.5);">PORTALE DEGLI INTERMEDIARI</span>
</header>
<div id="browser-toolbar">
<div class="a" style="left:0;top:0;width:2912px;height:99px;background:linear-gradient(#e4e4e9 0,#ececf2 6px,#f1f1f9 13px,#f1f1f9 100%)"></div>
<div class="a" style="left:0;top:97.800px;width:2912px;height:1.400px;background:rgba(240,252,255,.85)"></div>
<div class="a" style="left:0;top:99.200px;width:2912px;height:1.300px;background:#6ea5af"></div>
<div class="a" style="left:38.500px;top:37.500px;width:23px;height:23px;border-radius:50%;background:#fe5f57;box-shadow:inset 0 0 0 1px rgba(0,0,0,.12)"></div>
<div class="a" style="left:77.500px;top:37.500px;width:23px;height:23px;border-radius:50%;background:#febb2e;box-shadow:inset 0 0 0 1px rgba(0,0,0,.12)"></div>
<div class="a" style="left:116px;top:37.500px;width:23px;height:23px;border-radius:50%;background:#27c840;box-shadow:inset 0 0 0 1px rgba(0,0,0,.12)"></div>
<div class="a" style="left:867.300px;top:22.100px;width:1175.300px;height:50.400px;border:2px solid #cdcdd2;border-radius:14.500px"></div>
<svg class="i" style="left:0;top:0;width:2912px;height:99px" viewBox="0 0 2912 99" fill="none" stroke="#5f6066" stroke-width="2.6" stroke-linecap="round" stroke-linejoin="round">
<rect x="190.300" y="35.200" width="34.400" height="26.300" rx="4.300" stroke-width="2.800"/>
<path d="M202.500 35.500V61" stroke-width="2.300"/>
<path d="M194.300 41.300h4.300M194.300 45.600h4.300M194.300 49.900h4.300" stroke-width="1.800"/>
<path d="M240 32V66" stroke="#dcdce2" stroke-width="1.200"/>
<path d="M253 46l5.500 5.500 5.500-5.500" stroke="#70717a" stroke-width="2.800"/>
<path d="M329.500 36.300L316.700 48.300l12.800 12" stroke-width="3.400"/>
<path d="M385.500 36.300l12.800 12-12.800 12" stroke="#b0b0b7" stroke-width="3.400"/>
<g stroke="#2450b0" stroke-width="2.100" style="filter:drop-shadow(0 0 1.500px rgba(120,220,255,.9))">
<path d="M739.58 40.73Q736.60 39.10 739.57 37.44L747.73 32.86Q750.70 31.20 753.67 32.86L761.83 37.44Q764.80 39.10 761.82 40.73L753.68 45.17Q750.70 46.80 747.72 45.17Z"/>
<path d="M734.00 46.50Q734.00 43.30 736.77 44.89L744.63 49.41Q747.40 51.00 747.40 54.20L747.40 64.10Q747.40 67.30 744.63 65.71L736.77 61.19Q734.00 59.60 734.00 56.40Z"/>
<path d="M767.30 46.50Q767.30 43.30 764.53 44.89L756.67 49.41Q753.90 51.00 753.90 54.20L753.90 64.10Q753.90 67.30 756.67 65.71L764.53 61.19Q767.30 59.60 767.30 56.40Z"/>
</g>
<path d="M822.400 34.200C818.500 36.300 814.500 37.800 810.500 38.600V50C810.500 56.500 815.500 60.500 822.400 63.600C829.300 60.500 834.300 56.500 834.300 50V38.600C830.300 37.800 826.300 36.300 822.400 34.200Z" stroke="#a9a9b2" stroke-width="2.600"/>
<path d="M822.400 34.200C818.500 36.300 814.500 37.800 810.500 38.600V50C810.500 56.500 815.500 60.500 822.400 63.600Z" fill="#a9a9b2" stroke="none"/>
<path d="M1966.700 36.500h12.800q3 0 3 3v8.800q0 3-3 3h-7l-4.300 4v-4h-1.500q-3 0-3-3v-8.800q0-3 3-3z" stroke="#6c6c72" stroke-width="1.700"/>
<path d="M1981.600 41.400h13.200q3.500 0 3.500 3.500v9.200q0 3.500-3.500 3.500h-1.400v4.300l-5.300-4.300h-6.500q-3.500 0-3.500-3.500v-9.200q0-3.500 3.500-3.500z" fill="#6b6c72" stroke="#f1f1f9" stroke-width="1.300"/>
<path d="M2032 50.800A9 9 0 1 1 2026 42.300" stroke-width="2"/>
<path d="M2022.100 36.900l5.700 5.100-5.700 5.100" stroke-width="2"/>
<path d="M2714 40.400h-3.500q-3.200 0-3.200 3.200v16.400q0 3.200 3.200 3.200h18.900q3.200 0 3.200-3.200v-16.400q0-3.200-3.200-3.200h-3.500" stroke-width="2.800"/>
<path d="M2719.900 51.300V30.300M2713.700 36.300l6.200-6 6.200 6" stroke-width="2.700"/>
<path d="M2778.300 47.700h23.400M2790 36v23.400" stroke-width="3"/>
<rect x="2848.850" y="35.050" width="10.400" height="10" rx="2.300" stroke-width="2.700"/>
<rect x="2864.750" y="35.050" width="10.400" height="10" rx="2.300" stroke-width="2.700"/>
<rect x="2848.850" y="50.900" width="10.400" height="10.300" rx="2.300" stroke-width="2.700"/>
<rect x="2864.750" y="50.900" width="10.400" height="10.300" rx="2.300" stroke-width="2.700"/>
</svg>
<span class="t" style="left:1968.500px;top:36.800px;font-size:13px;font-weight:700;color:#6c6c72">A</span>
<span class="t" style="left:1983.300px;top:44px;font-size:10.500px;font-weight:700;color:#fff;font-family:'Liberation Sans','Noto Sans CJK SC',sans-serif">文</span>
<span class="t" style="left:1404.7px;top:38.0px;font-size:27px;color:#3a3a40;transform-origin:0 0;transform:scaleX(0.9806);">localhost</span>
</div>
<div class="a" style="left:0;top:1636px;width:2912px;height:72px;background:linear-gradient(rgba(0,0,0,0),rgba(0,0,0,.035) 40%,rgba(0,0,0,.16))"></div>
<div class="a" style="left:0;top:1706.900px;width:2912px;height:1.100px;background:#98ea98"></div>
<svg class="i" style="left:0;top:0;width:2912px;height:1708px;pointer-events:none" viewBox="0 0 2912 1708">
<path d="M0 0h14C5 3 1 10 0 22z" fill="#2a399f"/>
<path d="M2912 0h-12c7 2 11 5 12 10.500z" fill="#2a3a9c"/>
<path d="M0 1708v-20c1 9 5 16 14 18.500v1.500z" fill="#8d8780"/>
<path d="M2912 1708v-22c-1 10-6 17-16 20v2z" fill="#8d8780"/>
</svg>
</body></html>
